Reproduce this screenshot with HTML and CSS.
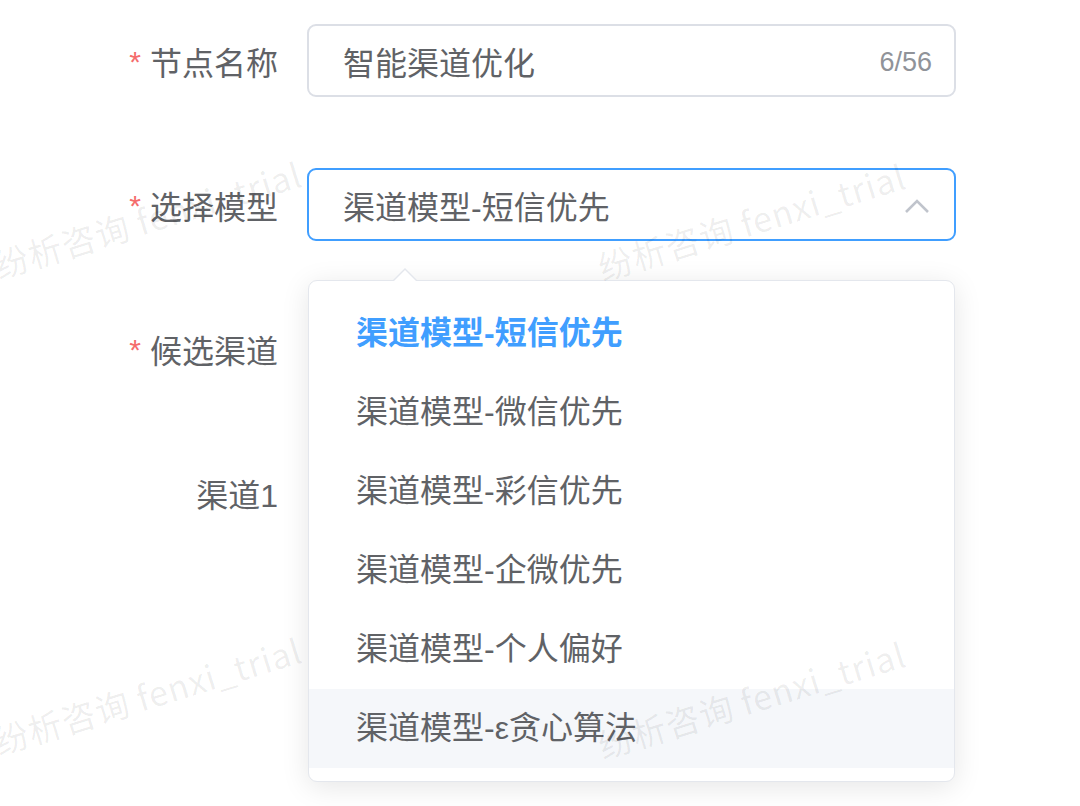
FILE: index.html
```html
<!DOCTYPE html>
<html lang="zh-CN">
<head>
  <meta charset="UTF-8" />
  <meta name="viewport" content="width=device-width, initial-scale=1.0" />
  <title>节点配置</title>
  <link rel="stylesheet" href="styles.css">
</head>
<body>
  <div class="page">
    <form class="form">
      <div class="form-item">
        <label class="form-label required">节点名称</label>
        <div class="form-content">
          <div class="input">
            <span class="input-value">智能渠道优化</span>
            <span class="input-count">6/56</span>
          </div>
        </div>
      </div>

      <div class="form-item">
        <label class="form-label required">选择模型</label>
        <div class="form-content select">
          <div class="input is-focus">
            <span class="input-value">渠道模型-短信优先</span>
            <svg class="select-arrow" width="26" height="16" viewBox="0 0 26 16">
              <polyline points="2,14 13,3 24,14" fill="none" stroke="#c0c4cc" stroke-width="2.6" />
            </svg>
          </div>

          <div class="select-dropdown">
            <ul class="select-list">
              <li class="select-item selected">渠道模型-短信优先</li>
              <li class="select-item">渠道模型-微信优先</li>
              <li class="select-item">渠道模型-彩信优先</li>
              <li class="select-item">渠道模型-企微优先</li>
              <li class="select-item">渠道模型-个人偏好</li>
              <li class="select-item hover">渠道模型-ε贪心算法</li>
            </ul>
          </div>
        </div>
      </div>

      <div class="form-item">
        <label class="form-label required">候选渠道</label>
        <div class="form-content"></div>
      </div>

      <div class="form-item">
        <label class="form-label">渠道1</label>
        <div class="form-content"></div>
      </div>
    </form>

    <div class="watermarks">
      <span class="watermark wm-1">纷析咨询 fenxi_trial</span>
      <span class="watermark wm-2">纷析咨询 fenxi_trial</span>
      <span class="watermark wm-3">纷析咨询 fenxi_trial</span>
      <span class="watermark wm-4">纷析咨询 fenxi_trial</span>
    </div>
  </div>
</body>
</html>
```

FILE: styles.css
```css
body {
  margin: 0;
  background: #fff;
  font-family: "Liberation Sans", "Noto Sans CJK SC", sans-serif;
  color: #606266;
}

.page {
  position: relative;
  width: 1080px;
  height: 806px;
  overflow: hidden;
}

.form {
  padding-top: 24px;
}

.form-item {
  display: flex;
  align-items: center;
  height: 73px;
  margin-bottom: 71px;
}

.form-label {
  width: 307px;
  box-sizing: border-box;
  padding-right: 29px;
  text-align: right;
  font-size: 32px;
  color: #606266;
}

.form-label.required::before {
  content: "*";
  color: #f56c6c;
  margin-right: 9px;
  font-size: 30px;
  position: relative;
  top: -3px;
}

.form-content {
  width: 649px;
  height: 73px;
}

.select {
  position: relative;
}

.input {
  height: 73px;
  box-sizing: border-box;
  border: 2px solid #dcdfe6;
  border-radius: 9px;
  padding: 0 22px 0 34px;
  display: flex;
  align-items: center;
  justify-content: space-between;
  background: #fff;
}

.input.is-focus {
  border-color: #409eff;
}

.input-value {
  font-size: 32px;
  color: #606266;
}

.input-count {
  font-size: 27px;
  color: #909399;
  margin-top: 4px;
}

.select-arrow {
  margin-right: 2px;
  margin-top: 3px;
}

.select-dropdown {
  position: absolute;
  top: 112px;
  left: 1px;
  width: 647px;
  box-sizing: border-box;
  background: #fff;
  border: 1px solid #e4e7ed;
  border-radius: 9px;
  box-shadow: 0 5px 28px rgba(0, 0, 0, 0.1);
  z-index: 5;
}

.select-dropdown::before,
.select-dropdown::after {
  content: "";
  position: absolute;
  left: 84px;
  width: 0;
  height: 0;
  border-style: solid;
  border-color: transparent;
}

.select-dropdown::before {
  top: -13px;
  border-width: 0 12px 12px 12px;
  border-bottom-color: #e4e7ed;
}

.select-dropdown::after {
  top: -11px;
  left: 85px;
  border-width: 0 11px 11px 11px;
  border-bottom-color: #fff;
}

.select-list {
  list-style: none;
  margin: 0;
  padding: 13px 0;
}

.select-item {
  height: 79px;
  line-height: 79px;
  padding: 0 47px;
  font-size: 32px;
  color: #606266;
}

.select-item.selected {
  color: #409eff;
  font-weight: 700;
}

.select-item.hover {
  background: #f5f7fa;
}

.watermarks {
  position: absolute;
  inset: 0;
  pointer-events: none;
  z-index: 10;
}

.watermark {
  position: absolute;
  font-family: "Noto Sans CJK SC", sans-serif;
  font-size: 34px;
  line-height: 34px;
  letter-spacing: 1px;
  white-space: nowrap;
  color: rgba(0, 0, 0, 0.07);
  transform: rotate(-17deg);
  transform-origin: left bottom;
}

.wm-1 { left: 0; top: 248px; }
.wm-2 { left: 604px; top: 250px; }
.wm-3 { left: 0; top: 724px; }
.wm-4 { left: 604px; top: 728px; }
```
